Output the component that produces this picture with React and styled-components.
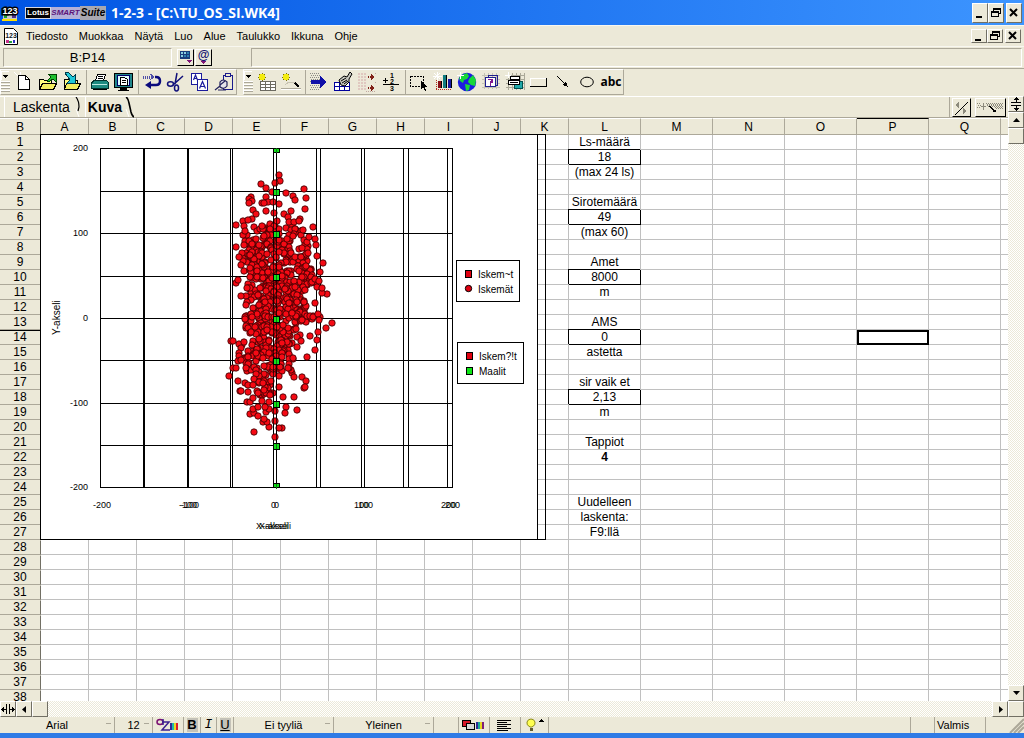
import React from "react";
import styled, { createGlobalStyle } from "styled-components";

const columns = [
  ["A", 48], ["B", 48], ["C", 48], ["D", 48], ["E", 48], ["F", 48],
  ["G", 48], ["H", 48], ["I", 48], ["J", 48], ["K", 48], ["L", 72],
  ["M", 72], ["N", 72], ["O", 72], ["P", 72], ["Q", 72], ["", 72],
];

const rowNumbers = Array.from({ length: 38 }, (_, i) => i + 1);

const cells = {
  L1: { text: "Ls-määrä" },
  L2: { text: "18", boxed: true },
  L3: { text: "(max 24 ls)" },
  L5: { text: "Sirotemäärä" },
  L6: { text: "49", boxed: true },
  L7: { text: "(max 60)" },
  L9: { text: "Amet" },
  L10: { text: "8000", boxed: true },
  L11: { text: "m" },
  L13: { text: "AMS" },
  L14: { text: "0", boxed: true },
  L15: { text: "astetta" },
  L17: { text: "sir vaik et" },
  L18: { text: "2,13", boxed: true },
  L19: { text: "m" },
  L21: { text: "Tappiot" },
  L22: { text: "4", bold: true },
  L25: { text: "Uudelleen" },
  L26: { text: "laskenta:" },
  L27: { text: "F9:llä" },
  P14: { text: "", selected: true },
};

const menus = ["Tiedosto", "Muokkaa", "Näytä", "Luo", "Alue", "Taulukko", "Ikkuna", "Ohje"];

// hits far from the main cluster
const strayHits = [
  [239, 41], [240, 47], [235, 49], [221, 50], [226, 54], [246, 59], [253, 62], [255, 66],
  [264, 55], [266, 64], [265, 75], [211, 63], [209, 65], [212, 67], [209, 69], [226, 63],
  [222, 69], [228, 68], [224, 69], [232, 58], [233, 68], [239, 70], [213, 76], [216, 80],
  [212, 85], [226, 77], [234, 79], [237, 87], [203, 87], [208, 86], [196, 91], [204, 92],
  [205, 97], [244, 80], [251, 77], [248, 83], [260, 85], [249, 88], [254, 88], [259, 87],
  [263, 96], [273, 93], [269, 103], [275, 105], [276, 111], [196, 113], [277, 122],
  [199, 123], [283, 129], [280, 138], [196, 149], [198, 146], [201, 162], [287, 160],
  [282, 159], [277, 153], [282, 154], [279, 147], [207, 168], [206, 171], [275, 169],
  [292, 189], [286, 194], [280, 183], [278, 180], [279, 186], [278, 198], [270, 202],
  [277, 206], [191, 207], [193, 207], [275, 216], [267, 223], [257, 213], [261, 207],
  [189, 242], [193, 234], [196, 234], [198, 247], [200, 257], [254, 243], [262, 243],
  [266, 247], [264, 254], [265, 253], [243, 263], [254, 263], [239, 242], [239, 253],
  [257, 276], [246, 273], [245, 279], [235, 277], [235, 287], [242, 294], [239, 294],
  [235, 303], [214, 298], [229, 293], [223, 288], [227, 288], [224, 285], [210, 280],
  [214, 279], [218, 282], [213, 275], [218, 273], [226, 278], [229, 275], [225, 273],
  [207, 268], [210, 268], [213, 264], [208, 258], [201, 257], [222, 267], [218, 259],
  [230, 261], [224, 256], [229, 268], [205, 249], [208, 251], [213, 251], [223, 249],
];

// [top, bottom, left, right, number of hits]
const hitBands = [
  [90, 100, 214, 262, 28],
  [100, 116, 203, 270, 68],
  [116, 130, 201, 268, 68],
  [130, 142, 201, 272, 68],
  [142, 152, 202, 278, 60],
  [152, 164, 206, 266, 60],
  [164, 178, 210, 266, 68],
  [178, 190, 205, 274, 62],
  [190, 204, 205, 264, 56],
  [204, 218, 197, 252, 52],
  [218, 230, 198, 256, 50],
  [230, 240, 204, 252, 34],
  [240, 262, 211, 234, 26],
];

function makeHits() {
  let seed = 1234;
  const random = () => {
    seed = (seed * 16807) % 2147483647;
    return seed / 2147483647;
  };
  const hits = [];
  hitBands.forEach(([top, bottom, left, right, count]) => {
    for (let i = 0; i < count; i++) {
      hits.push([
        Math.round(left + random() * (right - left)),
        Math.round(top + random() * (bottom - top)),
      ]);
    }
  });
  return hits.concat(strayHits);
}

const hits = makeHits();
const gridX = [60, 103, 104, 147, 148, 190, 192, 233, 236, 276, 280, 321, 324, 363, 368, 407, 412];
const gridY = [14, 57, 99, 142, 184, 226, 269, 311, 353];
const targetY = [16, 58, 100, 143, 185, 227, 270, 312, 352];

function Chart() {
  return (
    <ChartFrame>
      <ChartSvg viewBox="0 0 506 406" role="img" aria-label="Iskemät ja maalit">
        <rect x="0" y="0" width="498" height="406" fill="#fff" />
        <g fill="none" stroke="#000" shapeRendering="crispEdges">
          <rect x="0.5" y="0.5" width="505" height="405" />
          <path d="M497.5 0V406" />
          {gridX.map((x) => <path key={x} d={`M${x + 0.5} 14V354`} />)}
          {gridY.map((y) => <path key={y} d={`M60 ${y + 0.5}H413`} />)}
        </g>
        <g fill="#f50a14" stroke="#300000" strokeWidth="0.8">
          {hits.map(([x, y], i) => <circle key={i} cx={x} cy={y} r="3.2" />)}
        </g>
        <path d="M233.5 60V300M236.5 14V353" stroke="#000" strokeOpacity="0.7" shapeRendering="crispEdges" />
        <g shapeRendering="crispEdges">
          {targetY.map((y) => (
            <g key={y}>
              <rect x="233.5" y={Math.max(y - 3, 14) + 0.5} width="6" height={y < 20 || y > 350 ? 4 : 6} fill="#12e21a" stroke="#000" />
              <path d={`M236.5 ${y - 2}v5`} stroke="#0a7a10" />
            </g>
          ))}
          <g fill="#fff" stroke="#000">
            <rect x="416.5" y="126.5" width="63" height="41" />
            <rect x="417.5" y="208.5" width="66" height="41" />
          </g>
          <rect x="425.5" y="136.5" width="6" height="7" fill="#e00010" stroke="#000" />
          <rect x="426.5" y="218.5" width="6" height="7" fill="#e00010" stroke="#000" />
          <rect x="426.5" y="233.5" width="6" height="7" fill="#0de615" stroke="#000" />
        </g>
        <circle cx="428.5" cy="154.5" r="3.2" fill="#e00010" stroke="#000" />
        <LegendText x="438" y="144">Iskem~t</LegendText>
        <LegendText x="438" y="159">Iskemät</LegendText>
        <LegendText x="439" y="226">Iskem?!t</LegendText>
        <LegendText x="439" y="241">Maalit</LegendText>
        <AxisText x="48" y="17" textAnchor="end">200</AxisText>
        <AxisText x="48" y="102" textAnchor="end">100</AxisText>
        <AxisText x="48" y="187" textAnchor="end">0</AxisText>
        <AxisText x="48" y="272" textAnchor="end">-100</AxisText>
        <AxisText x="48" y="356" textAnchor="end">-200</AxisText>
        <AxisText x="53" y="374">-200</AxisText>
        <AxisText x="139" y="374">-100</AxisText>
        <AxisText x="141" y="374">-100</AxisText>
        <AxisText x="231" y="374">0</AxisText>
        <AxisText x="234" y="374">0</AxisText>
        <AxisText x="314" y="374">100</AxisText>
        <AxisText x="318" y="374">100</AxisText>
        <AxisText x="401" y="374">200</AxisText>
        <AxisText x="405" y="374">200</AxisText>
        <AxisText x="216" y="395">X-akseli</AxisText>
        <AxisText x="219" y="395">X-akseli</AxisText>
        <LegendText x="-201" y="20" transform="rotate(-90)">Y-akseli</LegendText>
      </ChartSvg>
    </ChartFrame>
  );
}

const Svg = ({ w = 20, h = 20, children }) => (
  <svg width={w} height={h} viewBox={`0 0 ${w} ${h}`} fill="none" shapeRendering="crispEdges" aria-hidden="true">
    {children}
  </svg>
);

const Spark = () => <path d="M4 0v9M0 4h9M1 1l6 6M7 1l-6 6" stroke="#fff" />;

const Sun = () => (
  <>
    <path d="M5 1v8M1 5h8M2 2l6 6M8 2L2 8" stroke="#77700c" />
    <path d="M3 2h4v1h1v4H7v1H3V7H2V3h1z" fill="#f4ec10" />
  </>
);

const Fraction = () => (
  <Svg>
    <path d="M2 8.500h5M4.500 6v5" stroke="#000" />
    <path d="M2 12.500h16" stroke="#000" />
    <FractionText x="9" y="6">1</FractionText>
    <FractionText x="9" y="12">2</FractionText>
    <FractionText x="9" y="19">3</FractionText>
  </Svg>
);

const icons = {
  new: (
    <Svg>
      <path d="M0 0l6 6M6 0v6" stroke="#fff" />
      <path d="M4.500 3.500h7l4 4v10h-11z" fill="#fff" stroke="#000" />
      <path d="M11.500 3.500v4h4" stroke="#000" />
    </Svg>
  ),
  open: (
    <Svg>
      <path d="M1.500 17V7.500h4l1 1h7v3" fill="#ffff80" stroke="#000" />
      <path d="M1.500 17.500l3-6h14l-3 6z" fill="#f2ee60" stroke="#000" />
      <path d="M9 9l4-4-3-3h8v8l-3-3-4 3z" fill="#1fc02f" stroke="#004000" />
    </Svg>
  ),
  save: (
    <Svg>
      <path d="M2.500 17V7.500h4l1 1h8v3" fill="#ffff80" stroke="#000" />
      <path d="M2.500 17.500l2-6h14l-3 6z" fill="#f2ee60" stroke="#000" />
      <path d="M3 1l3-1 5 5 2-2v8H5l3-3z" fill="#20c8d8" stroke="#003848" />
    </Svg>
  ),
  print: (
    <Svg>
      <path d="M5.500 9l2-7h8l-2 7z" fill="#fff" stroke="#000" />
      <path d="M8 4.500h5M8 6.500h5" stroke="#000" />
      <path d="M1.500 16V11l3-3h12l2 3v5z" fill="#1d8a80" stroke="#00302c" />
      <path d="M2 12.500h15" stroke="#b8e8e0" />
      <path d="M3 17.500h14" stroke="#000" />
    </Svg>
  ),
  preview: (
    <Svg>
      <rect x="0.500" y="1.500" width="18" height="14" fill="#22878c" stroke="#000" />
      <rect x="3.500" y="3.500" width="12" height="10" fill="#dff" stroke="#00006c" />
      <path d="M6.500 5.500h4l3 2v6h-7zM8 8.500h4M8 10.500h4" fill="#fff" stroke="#000" />
      <path d="M6 16h7v2h2v1H4v-1h2z" fill="#000" />
    </Svg>
  ),
  undo: (
    <Svg>
      <path d="M1 5h9" stroke="#5050a8" strokeDasharray="1 1" strokeWidth="3" />
      <path d="M8 2l4 3-4 3" stroke="#5050a8" />
      <g shapeRendering="auto">
        <path d="M13 5h1q4 0 4 4 0 4-4 4H8" stroke="#0b0b7d" strokeWidth="2.500" />
        <path d="M9 9v8l-6-4z" fill="#0b0b7d" />
      </g>
    </Svg>
  ),
  cut: (
    <Svg>
      <g stroke="#10107a" strokeWidth="1.500" shapeRendering="auto">
        <path d="M11 1L9 12M17 4L7 13" />
        <ellipse cx="4.500" cy="12" rx="3" ry="2.200" />
        <ellipse cx="10.500" cy="16" rx="2" ry="3" />
      </g>
    </Svg>
  ),
  copy: (
    <Svg>
      <rect x="1.500" y="1.500" width="10" height="11" fill="#fff" stroke="#1b1b9c" />
      <rect x="7.500" y="7.500" width="10" height="11" fill="#fff" stroke="#1b1b9c" />
      <g shapeRendering="auto" stroke="#1b1b9c" strokeWidth="1.200">
        <path d="M3.500 8l2-5 2 5M4 6.500h3M9.500 16.500l3-7 3 7M10.500 14.500h4" />
      </g>
    </Svg>
  ),
  paste: (
    <Svg>
      <path d="M9.500 3.500h2v-2h5v2h2v14h-9z" fill="#ece9d8" stroke="#1b1b8c" />
      <path d="M11 4.500h6" stroke="#1b1b8c" />
      <g shapeRendering="auto" stroke="#22225c" strokeWidth="1.200">
        <path d="M6 10q3-4 7 0v4q-3 4-7 1z" fill="#e4e4e8" />
        <path d="M6 13l5-4M1 18l5-4M4 18h8" />
      </g>
    </Svg>
  ),
  newTable: (
    <Svg>
      <path d="M3 9h16v10H3z" fill="#fff" />
      <path d="M3.500 9v10M8.500 9v10M13.500 9v10M18.500 9v10M3 9.500h16M3 12.500h16M3 15.500h16M3 18.500h16" stroke="#6c6a60" />
      <Sun />
    </Svg>
  ),
  newLine: (
    <Svg>
      <path d="M0 17.500h20" stroke="#fff" />
      <path d="M0 16.500h20" stroke="#aca899" />
      <path d="M4 13l4-3h6l4 5" stroke="#c8c4b4" />
      <path d="M14 11l4 4" stroke="#000" strokeWidth="1.500" />
      <Sun />
    </Svg>
  ),
  goTo: (
    <Svg>
      {[1, 3, 5, 7, 9, 11, 13, 15, 17].map((y, i) => (
        <path key={y} d={`M${1 + (i % 2)} ${y}.5h9`} stroke="#8c8c84" strokeDasharray="1 1" />
      ))}
      <path d="M2 8h9V4l7 6-7 6v-4H2z" fill="#1010a8" />
    </Svg>
  ),
  format: (
    <Svg>
      <path d="M1 10h16v9H1z" fill="#fff" />
      <path d="M1.500 10v9M6.500 10v9M11.500 10v9M16.500 10v9M1 10.500h16M1 14.500h16M1 18.500h16" stroke="#00009c" />
      <g shapeRendering="auto">
        <path d="M6 8l5-4 3 1 3-5 2 2-3 5v3l-4 4-4-1z" fill="#c8c8c0" stroke="#000" />
        <path d="M8 9l5-3M9 11l5-3M11 12l4-3" stroke="#000" />
      </g>
    </Svg>
  ),
  transpose: (
    <Svg>
      {[1, 4, 7, 10, 13, 16].map((y) => (
        <path key={y} d={`M1 ${y}.500h8`} stroke="#e0c8c0" strokeWidth="2" strokeDasharray="2 1" />
      ))}
      <path d="M11 4.500h4M11 15.500h4" stroke="#802018" strokeDasharray="1 1" strokeWidth="2" />
      <path d="M14 2l4 3-4 3zM14 13l4 3-4 3z" fill="#802018" />
      <path d="M18 1h1M18 10h1M9 19h10" stroke="#c0a8a0" strokeDasharray="1 1" />
    </Svg>
  ),
  sum: <Fraction />,
  select: (
    <Svg>
      <rect x="1.500" y="4.500" width="13" height="10" stroke="#000" strokeDasharray="2 1" />
      <path d="M12 9v8l2-2 2 4 1-1-1-3h2z" fill="#000" />
    </Svg>
  ),
  chart: (
    <Svg>
      <Spark />
      <path d="M3 17.500h16" stroke="#b03020" strokeDasharray="1 1" />
      <path d="M3.500 8v9" stroke="#b03020" strokeDasharray="1 1" />
      <path d="M5 9h3v7H5z" fill="#8a1018" />
      <path d="M10 3h3v13h-3z" fill="#107c80" />
      <path d="M15 7h3v9h-3z" fill="#1818a0" />
      <path d="M8.500 9v7M13.500 3v13M18.500 7v9" stroke="#000" />
    </Svg>
  ),
  map: (
    <Svg>
      <g shapeRendering="auto">
        <circle cx="10" cy="10" r="9.200" fill="#1c1ce0" />
        <path d="M5 3l5-2 2 3-2 3-3 1-1 3-3-2-1-3zM12 7l4-4 3 5-1 6-4-1-3-3zM8 12l5 1-1 5-3 1z" fill="#18d838" />
      </g>
      <path d="M3 0v7M0 3h7" stroke="#fff" />
    </Svg>
  ),
  help: (
    <Svg>
      <path d="M3 1v16M7 1v16M11 1v16M15 1v16M1 3h18M1 7h18M1 11h18M1 15h18" stroke="#c4c2b4" />
      <path d="M7.500 5.500v-2h9v10h-2" stroke="#202090" />
      <rect x="4.500" y="5.500" width="10" height="9" fill="#fff" stroke="#202090" />
      <path d="M7 7.500h4v2.500H9.500v1.500M9 13h1" stroke="#801890" strokeWidth="1.500" />
    </Svg>
  ),
  layers: (
    <Svg>
      <path d="M3 1v17M7 1v17M11 1v17M15 1v17M19 1v17M1 3h18M1 7h18M1 11h18M1 15h18" stroke="#aaa898" />
      <path d="M9.500 9.500h8v7h-8z" fill="#20a8a8" stroke="#005050" />
      <path d="M5.500 4.500h9v3h-9zM3.500 8.500h11v4h-11z" fill="#fff" stroke="#000" />
      <path d="M5 10.500h8" stroke="#000" />
      <path d="M3 0v6M0 3h6" stroke="#fff" />
    </Svg>
  ),
  button: (
    <Svg>
      <path d="M1.500 14V6.500h15" stroke="#fff" />
      <path d="M1 14.500h16.500V6" stroke="#000" />
    </Svg>
  ),
  line: (
    <Svg>
      <path d="M4 4l8 8" stroke="#000" />
      <path d="M15 15l-6-2 4-4z" fill="#000" />
    </Svg>
  ),
  ellipse: (
    <Svg>
      <ellipse cx="10" cy="10" rx="6.300" ry="4.800" stroke="#000" shapeRendering="auto" />
    </Svg>
  ),
};

const smartIcons = [
  {
    name: "Tiedosto",
    groups: [["new", "open", "save"], ["print", "preview"], ["undo", "cut", "copy", "paste"]],
  },
  {
    name: "Taulukko",
    groups: [
      ["newTable", "newLine"],
      ["goTo", "format", "transpose", "sum"],
      ["select", "chart", "map", "help", "layers", "button", "line", "ellipse", "text"],
    ],
  },
];

const Arrow = ({ dir }) => {
  const paths = {
    up: "M1 6h7L4.500 2z",
    down: "M1 2h7L4.500 6z",
    left: "M6 1v7L2 4.500z",
    right: "M3 1v7l4-3.500z",
  };
  return (
    <svg width="9" height="9" viewBox="0 0 9 9" aria-hidden="true">
      <path d={paths[dir]} fill="#000" />
    </svg>
  );
};

function WindowButtons({ small, label }) {
  return (
    <WindowControls>
      <CaptionButton $small={small} aria-label={`${label} pienennä`}>
        <Svg w={12} h={12}><path d="M2 9h6v2H2z" fill="#000" /></Svg>
      </CaptionButton>
      <CaptionButton $small={small} aria-label={`${label} palauta`}>
        <Svg w={12} h={12}>
          <path d="M3.500 4V1.500h7v5h-2M3 2h8" stroke="#000" />
          <rect x="1.500" y="4.500" width="7" height="5" fill="#ece9d8" stroke="#000" />
          <path d="M1 5.500h8" stroke="#000" />
        </Svg>
      </CaptionButton>
      <CaptionButton $small={small} $apart aria-label={`${label} sulje`}>
        <Svg w={12} h={12}><path d="M2 2l7 7M9 2l-7 7" stroke="#000" strokeWidth="2" shapeRendering="auto" /></Svg>
      </CaptionButton>
    </WindowControls>
  );
}

function TitleBar() {
  return (
    <Title>
      <svg width="18" height="18" viewBox="0 0 18 18" aria-hidden="true">
        <path d="M2 10h14v5H2z" fill="#c8c8c8" />
        <path d="M3 10h3v4H3z" fill="#18a030" />
        <path d="M11 9h4v5h-4z" fill="#50308c" />
        <path d="M1 15h15v2H1z" fill="#ffe000" />
        <IconDigits x="9" y="10" textAnchor="middle" fill="#fff" stroke="#000" strokeWidth="3" paintOrder="stroke">123</IconDigits>
      </svg>
      <LogoGroup>
        <LotusMark>Lotus</LotusMark>
        <SmartMark>SMART</SmartMark>
        <SuiteMark>Suite</SuiteMark>
      </LogoGroup>
      <TitleText>1-2-3 - [C:\TU_OS_SI.WK4]</TitleText>
      <WindowButtons label="Ohjelma" />
    </Title>
  );
}

function MenuBar() {
  return (
    <Menu>
      <svg width="14" height="17" viewBox="0 0 14 17" aria-hidden="true">
        <path d="M.5.500h9l4 4v12H.5z" fill="#fff" stroke="#000" />
        <IconDigits $small x="7" y="10" textAnchor="middle" fill="#102020">123</IconDigits>
        <path d="M2 12h3v3H2z" fill="#c8308c" />
        <path d="M5 13h3v2H5z" fill="#20a040" />
        <path d="M9 12h2v3H9z" fill="#3030c0" />
      </svg>
      <MenuItems>
        {menus.map((item) => <MenuItem key={item}>{item}</MenuItem>)}
      </MenuItems>
      <WindowButtons small label="Ikkuna" />
    </Menu>
  );
}

function EditLine() {
  return (
    <EditRow>
      <Address>B:P14</Address>
      <NavButtons>
        <SquareButton aria-label="Siirtyminen">
          <Svg w={14} h={14}>
            <path d="M1 1h10v8H1z" fill="#1b3c7c" />
            <path d="M2 2h2v2H2zM2 5h2v2H2zM5 2h2v2H5z" fill="#8cd0e0" />
            <path d="M8 2h2v2H8zM5 5h2v2H5zM8 5h2v2H8z" fill="#2c80b0" />
            <path d="M7 10h6l-3 3z" fill="#801878" />
          </Svg>
        </SquareButton>
        <SquareButton aria-label="Funktiot">
          <AtSign>@</AtSign>
          <Svg w={5} h={3}><path d="M0 0h5L2.500 3z" fill="#801878" /></Svg>
        </SquareButton>
      </NavButtons>
      <Contents aria-label="Solun sisältö" defaultValue="" />
    </EditRow>
  );
}

function Toolbar() {
  return (
    <ToolRow>
      {smartIcons.map((bar) => (
        <ToolBar key={bar.name}>
          <Handle aria-label={bar.name}>
            <svg width="9" height="22" viewBox="0 0 9 22" aria-hidden="true" shapeRendering="crispEdges">
              <path d="M2 4h5L4.500 7z" fill="#000" />
              <path d="M0 11.500h9M0 14.500h9M0 17.500h9M0 20.500h9" stroke="#aca899" />
              <path d="M0 10.500h9M0 13.500h9M0 16.500h9M0 19.500h9M.5 0v9M0 .5h8" stroke="#fff" />
            </svg>
          </Handle>
          {bar.groups.map((group) => (
            <ToolGroup key={group[0]}>
              {group.map((icon) => (
                <ToolButton key={icon} aria-label={icon}>
                  {icon === "text" ? <Abc>abc</Abc> : icons[icon]}
                </ToolButton>
              ))}
            </ToolGroup>
          ))}
        </ToolBar>
      ))}
    </ToolRow>
  );
}

const TabEdge = ({ active }) => (
  <svg width="9" height="21" viewBox="0 0 9 21" fill="none" aria-hidden="true">
    <path d={active ? "M1 0q2 1 3 6l2 9q1 4 3 5" : "M1 0q3 4 3 10l-1 4"} stroke="#000" strokeWidth={active ? 1.600 : 1.200} />
    <path d="M1 12l3 8" stroke="#fff" />
  </svg>
);

function SheetTabs() {
  return (
    <TabRow>
      <Tab>Laskenta<TabEdge /></Tab>
      <Tab $active>Kuva<TabEdge active /></Tab>
      <TabTools>
        <TabTool $width={19} aria-label="Selaa välilehtiä">
          <Svg w={16} h={16}>
            <path d="M2 15L15 2" stroke="#000" />
            <path d="M6 2v6L2 5zM10 8v6l4-3z" fill="#8c8a7c" />
          </Svg>
        </TabTool>
        <TabTool $width={31} aria-label="Uusi taulukko">
          <Svg w={28} h={16}>
            <path d="M1 3.500h4M2 5.500h4M1 7.500h3M10 3.500h17M11 5.500h16" stroke="#8c8a7c" strokeDasharray="1 1" />
            <path d="M11 4.500h16M12 6.500h15M19 7.500h8M20 8.500h7" stroke="#8c8a7c" strokeDasharray="1 1" />
            <path d="M7.500 3v7M5 6.500h5" stroke="#8c8a7c" />
            <path d="M14 6l4 5h2" stroke="#000" strokeWidth="1.500" />
          </Svg>
        </TabTool>
      </TabTools>
    </TabRow>
  );
}

function Sheet() {
  return (
    <SheetArea>
      <Grid>
        <colgroup>
          <Col $width={41} />
          {columns.map(([name, width]) => <Col key={name} $width={width} />)}
        </colgroup>
        <thead>
          <tr>
            <Head $corner>B</Head>
            {columns.map(([name]) => (
              <Head key={name} $current={name === "P"}>{name}</Head>
            ))}
          </tr>
        </thead>
        <tbody>
          {rowNumbers.map((row) => (
            <tr key={row}>
              <RowHead $current={row === 14}>{row}</RowHead>
              {columns.map(([name]) => {
                const cell = cells[name + row] || {};
                return (
                  <Cell key={name} $boxed={cell.boxed} $bold={cell.bold} $selected={cell.selected}>
                    {cell.text}
                  </Cell>
                );
              })}
            </tr>
          ))}
        </tbody>
      </Grid>
      <Chart />
    </SheetArea>
  );
}

function StatusBar() {
  return (
    <Status>
      <StatusButton $width={115} $drop>Arial</StatusButton>
      <StatusButton $width={38} $drop>12</StatusButton>
      <StatusButton $width={31} aria-label="Tekstin väri">
        <Svg w={24} h={14}>
          <g shapeRendering="auto">
            <ellipse cx="4" cy="4" rx="3" ry="2.500" stroke="#7c1070" strokeWidth="1.500" />
            <path d="M7 1v6M6 4h7L6 12h8" stroke="#3c2090" strokeWidth="1.500" />
          </g>
          <path d="M14 5h2v7h-2z" fill="#302898" />
          <path d="M16 5h2v7h-2z" fill="#20b8a8" />
          <path d="M18 5h2v7h-2z" fill="#e8d820" />
          <path d="M20 5h2v7h-2z" fill="#d81c30" />
        </Svg>
      </StatusButton>
      <StatusButton $width={17}><Letter $pressed as="b">B</Letter></StatusButton>
      <StatusButton $width={16}><Letter $serif as="i">I</Letter></StatusButton>
      <StatusButton $width={17}><Letter $pressed as="u">U</Letter></StatusButton>
      <StatusButton $width={100} $drop>Ei tyyliä</StatusButton>
      <StatusButton $width={100} $drop>Yleinen</StatusButton>
      <StatusPane $width={25} />
      <StatusButton $width={31} aria-label="Reunat ja taustaväri">
        <Svg w={24} h={12}>
          <rect x="0.500" y="1.500" width="8" height="6" fill="#d81828" stroke="#000" />
          <rect x="4.500" y="4.500" width="8" height="6" fill="#d8d8d8" stroke="#000" />
          <path d="M14 3h2v7h-2z" fill="#302898" />
          <path d="M16 3h2v7h-2z" fill="#18a898" />
          <path d="M18 3h2v7h-2z" fill="#e8d820" />
          <path d="M20 3h2v7h-2z" fill="#802078" />
        </Svg>
      </StatusButton>
      <StatusButton $width={31} aria-label="Tasaus">
        <Svg w={18} h={13}>
          <path d="M1 1.500h14M1 3.500h10M1 5.500h14M1 7.500h10M1 9.500h14M1 11.500h11" stroke="#000" />
        </Svg>
      </StatusButton>
      <StatusButton $width={28} aria-label="Vihje">
        <Svg w={20} h={14}>
          <g shapeRendering="auto">
            <path d="M5 9Q1 7 2 4q1-3 4-3t4 3q1 3-3 5z" fill="#ffff50" stroke="#8c8a20" />
            <path d="M5 10h3v3H5z" fill="#605c30" />
          </g>
          <path d="M14 4h5l-2.500-3z" fill="#000" />
        </Svg>
      </StatusButton>
      <StatusPane $grow />
      <StatusPane $width={24} />
      <StatusPane $width={51} $left>Valmis</StatusPane>
      <Grip>
        <svg width="16" height="16" viewBox="0 0 16 16" aria-hidden="true">
          <path d="M2 16L16 2M6 16L16 6M10 16l6-6" stroke="#aca899" strokeWidth="2" />
        </svg>
      </Grip>
    </Status>
  );
}

export default function App() {
  return (
    <Window>
      <GlobalStyle />
      <TitleBar />
      <MenuBar />
      <EditLine />
      <Toolbar />
      <Workspace>
        <Document>
          <SheetTabs />
          <Sheet />
        </Document>
        <VerticalScroll>
          <ScrollButton aria-label="Jaa vaakasuunnassa">
            <Svg w={14} h={14}>
              <path d="M2 5.500h10M2 8.500h10M7.500 1v4M7.500 9v4" stroke="#000" />
              <path d="M5 3h5L7.500 0zM5 11h5l-2.500 3z" fill="#000" />
            </Svg>
          </ScrollButton>
          <ScrollButton aria-label="Ylös"><Arrow dir="up" /></ScrollButton>
          <Thumb />
          <Track />
          <ScrollButton aria-label="Alas"><Arrow dir="down" /></ScrollButton>
        </VerticalScroll>
      </Workspace>
      <HorizontalScroll>
        <ScrollButton aria-label="Jaa pystysuunnassa">
          <Svg w={14} h={14}>
            <path d="M5.500 2v10M8.500 2v10M1 7.500h4M9 7.500h4" stroke="#000" />
            <path d="M3 5v5L0 7.500zM11 5v5l3-2.500z" fill="#000" />
          </Svg>
        </ScrollButton>
        <ScrollButton aria-label="Vasemmalle"><Arrow dir="left" /></ScrollButton>
        <Thumb />
        <Track />
        <ScrollButton aria-label="Oikealle"><Arrow dir="right" /></ScrollButton>
        <Thumb />
      </HorizontalScroll>
      <StatusBar />
      <Taskbar />
    </Window>
  );
}

const GlobalStyle = createGlobalStyle`
  * {
    box-sizing: border-box;
  }
  body {
    margin: 0;
    background: #ece9d8;
  }
  body, button, input {
    font-family: "Liberation Sans", Arial, sans-serif;
    font-size: 11px;
    color: #000;
  }
  button {
    margin: 0;
    padding: 0;
    border: 0;
    background: none;
  }
  svg {
    display: block;
    flex: none;
  }
`;

const Window = styled.div`
  display: flex;
  flex-direction: column;
  height: 100vh;
  overflow: hidden;
  background: #ece9d8;
`;

const Title = styled.header`
  display: flex;
  align-items: center;
  height: 25px;
  padding: 0 2px 0 1px;
  background: linear-gradient(90deg, #0054e3, #3d95ff);
`;

const LogoGroup = styled.div`
  display: flex;
  align-items: center;
  width: 81px;
  height: 14px;
  margin-left: 6px;
`;

const LotusMark = styled.span`
  width: 26px;
  border: 1px solid #d8d8e0;
  background: #000;
  color: #fff;
  font: bold 8px/10px "Liberation Sans", sans-serif;
  text-align: center;
`;

const SmartMark = styled.span`
  width: 29px;
  background: #b4b0d8;
  color: #5c1478;
  font: italic bold 8px/12px "Liberation Sans", sans-serif;
  text-align: center;
`;

const SuiteMark = styled.span`
  width: 26px;
  background: #a8a8b0;
  color: #000;
  font: italic bold 10px/14px "Liberation Sans", sans-serif;
  text-align: center;
`;

const TitleText = styled.h1`
  margin: 0 0 0 5px;
  flex: 1;
  color: #fff;
  font: bold 14px/18px "Open Sans", sans-serif;
  white-space: nowrap;
`;

const IconDigits = styled.text`
  font: bold ${(p) => (p.$small ? "7px" : "9px")} "Liberation Sans", sans-serif;
`;

const FractionText = styled.text`
  fill: #000;
  font: bold 7px "Liberation Sans", sans-serif;
`;

const WindowControls = styled.div`
  display: flex;
  margin-left: auto;
`;

const CaptionButton = styled.button`
  display: flex;
  align-items: center;
  justify-content: center;
  width: 16px;
  height: ${(p) => (p.$small ? "14px" : "20px")};
  margin-left: ${(p) => (p.$apart ? "2px" : "0")};
  background: #ece9d8;
  border: 1px solid;
  border-color: #fff #716f64 #716f64 #fff;
`;

const Menu = styled.nav`
  display: flex;
  align-items: center;
  height: 21px;
  padding: 0 3px 0 4px;
  border-top: 1px solid #f8f7f0;
`;

const MenuItems = styled.div`
  display: flex;
  gap: 11px;
  margin-left: 8px;
`;

const MenuItem = styled.button`
  line-height: 14px;
`;

const EditRow = styled.div`
  display: flex;
  align-items: center;
  height: 23px;
  padding: 1px 2px 2px 3px;
  border-top: 1px solid #f8f7f0;
  border-bottom: 1px solid #aca899;
`;

const Address = styled.output`
  width: 169px;
  height: 19px;
  border: 1px solid;
  border-color: #aca899 #fff #fff #aca899;
  font-size: 13px;
  line-height: 17px;
  text-align: center;
`;

const NavButtons = styled.div`
  display: flex;
  gap: 1px;
  margin-left: 5px;
`;

const SquareButton = styled.button`
  display: flex;
  flex-direction: column;
  align-items: center;
  justify-content: center;
  width: 17px;
  height: 17px;
  border: 1px solid;
  border-color: #fff #000 #000 #fff;
`;

const AtSign = styled.span`
  color: #101070;
  font-size: 12px;
  font-weight: bold;
  line-height: 11px;
`;

const Contents = styled.input`
  flex: 1;
  height: 19px;
  margin-left: 39px;
  border: 1px solid;
  border-color: #aca899 #fff #fff #aca899;
  background: #ece9d8;
`;

const ToolRow = styled.div`
  display: flex;
  gap: 6px;
  height: 27px;
`;

const ToolBar = styled.div`
  display: flex;
  align-items: center;
  height: 26px;
  border: 1px solid;
  border-color: #fff #aca899 #aca899 #fff;
`;

const Handle = styled.button`
  width: 11px;
`;

const ToolGroup = styled.div`
  display: flex;
  & + & {
    margin-left: 2px;
    padding-left: 1px;
    border-left: 1px solid #aca899;
  }
`;

const ToolButton = styled.button`
  display: flex;
  align-items: center;
  justify-content: center;
  width: 24px;
  height: 24px;
`;

const Abc = styled.span`
  font: bold 12px/20px "Open Sans", sans-serif;
`;

const Workspace = styled.main`
  display: flex;
  flex: 1;
  min-height: 0;
`;

const Document = styled.div`
  display: flex;
  flex-direction: column;
  flex: 1;
  min-width: 0;
`;

const TabRow = styled.div`
  display: flex;
  flex: none;
  height: 22px;
  padding-left: 4px;
  border-top: 1px solid #fff;
  border-bottom: 1px solid #aca899;
`;

const Tab = styled.button`
  display: flex;
  justify-content: space-between;
  margin-right: 1px;
  padding-left: ${(p) => (p.$active ? "2px" : "8px")};
  gap: ${(p) => (p.$active ? "3px" : "5px")};
  border-left: 1px solid #fff;
  font-size: 14px;
  font-weight: ${(p) => (p.$active ? "bold" : "normal")};
  line-height: 21px;
`;

const TabTools = styled.div`
  display: flex;
  gap: 4px;
  margin-left: auto;
  padding: 1px 2px 0 2px;
  border-left: 1px solid #aca899;
`;

const TabTool = styled.button`
  width: ${(p) => p.$width}px;
  height: 19px;
  border: 1px solid;
  border-color: #fff #000 #000 #fff;
`;

const SheetArea = styled.section`
  position: relative;
  flex: 1;
  min-height: 0;
  overflow: hidden;
  background: #fff;
`;

const Grid = styled.table`
  table-layout: fixed;
  width: 1073px;
  border-collapse: separate;
  border-spacing: 0;
`;

const Col = styled.col`
  width: ${(p) => p.$width}px;
`;

const Head = styled.th`
  height: 17px;
  padding: 2px 0 0;
  background: #ece9d8;
  border-top: 1px solid ${(p) => (p.$current ? "#000" : "#fff")};
  border-right: 1px solid ${(p) => (p.$corner ? "#716f64" : "#aca899")};
  border-bottom: 1px solid #aca899;
  font-size: 12px;
  font-weight: normal;
  line-height: 13px;
`;

const RowHead = styled.th`
  height: 15px;
  padding: 0;
  background: #ece9d8;
  border-top: 1px solid ${(p) => (p.$current ? "#000" : "#ece9d8")};
  border-right: 1px solid #716f64;
  border-bottom: 1px solid #aca899;
  font-size: 12px;
  font-weight: normal;
  line-height: 13px;
`;

const Cell = styled.td`
  height: 15px;
  padding: 0;
  border-right: 1px solid ${(p) => (p.$boxed ? "#000" : "#c0c0c0")};
  border-bottom: 1px solid ${(p) => (p.$boxed ? "#000" : "#c0c0c0")};
  box-shadow: ${(p) => (p.$boxed ? "-1px -1px 0 #000" : "none")};
  outline: ${(p) => (p.$selected ? "2px solid #000" : "none")};
  outline-offset: -2px;
  font-size: 12px;
  font-weight: ${(p) => (p.$bold ? "bold" : "normal")};
  line-height: 14px;
  text-align: center;
  white-space: nowrap;
`;

const ChartFrame = styled.figure`
  position: absolute;
  left: 40px;
  top: 16px;
  margin: 0;
`;

const ChartSvg = styled.svg`
  width: 506px;
  height: 406px;
`;

const AxisText = styled.text`
  font: 9px "Liberation Sans", Arial, sans-serif;
`;

const LegendText = styled.text`
  font: 10px "Liberation Sans", Arial, sans-serif;
`;

const VerticalScroll = styled.div`
  display: flex;
  flex-direction: column;
  width: 16px;
`;

const HorizontalScroll = styled.div`
  display: flex;
  flex: none;
  height: 16px;
`;

const ScrollButton = styled.button`
  display: flex;
  align-items: center;
  justify-content: center;
  flex: none;
  width: 16px;
  height: 16px;
  background: #ece9d8;
  border: 1px solid;
  border-color: #fff #716f64 #716f64 #fff;
`;

const Thumb = styled.div`
  flex: none;
  width: 16px;
  height: 16px;
  background: #ece9d8;
  border: 1px solid;
  border-color: #fff #716f64 #716f64 #fff;
`;

const Track = styled.div`
  flex: 1;
  background: repeating-conic-gradient(#fff 0 25%, #ece9d8 0 50%) 0 0 / 2px 2px;
`;

const Status = styled.footer`
  display: flex;
  flex: none;
  height: 16px;
`;

const StatusPane = styled.div`
  flex: ${(p) => (p.$grow ? "1" : "none")};
  width: ${(p) => (p.$grow ? "auto" : `${p.$width}px`)};
  padding-left: ${(p) => (p.$left ? "2px" : "0")};
  border-right: 1px solid #aca899;
  line-height: 16px;
`;

const StatusButton = styled.button`
  position: relative;
  display: flex;
  align-items: center;
  justify-content: center;
  flex: none;
  width: ${(p) => p.$width}px;
  border-right: 1px solid #aca899;
  line-height: 16px;
  &::after {
    content: "";
    display: ${(p) => (p.$drop ? "block" : "none")};
    position: absolute;
    top: 6px;
    right: 3px;
    width: 5px;
    height: 1px;
    background: #aca899;
  }
`;

const Letter = styled.span`
  width: 11px;
  background: ${(p) => (p.$pressed ? "#c4c2b8" : "none")};
  font-family: ${(p) => (p.$serif ? '"Liberation Mono", monospace' : "inherit")};
  font-size: 13px;
  line-height: 14px;
`;

const Grip = styled.div`
  width: 38px;
  display: flex;
  justify-content: flex-end;
`;

const Taskbar = styled.div`
  flex: none;
  height: 5px;
  background: #2f7be6;
`;
